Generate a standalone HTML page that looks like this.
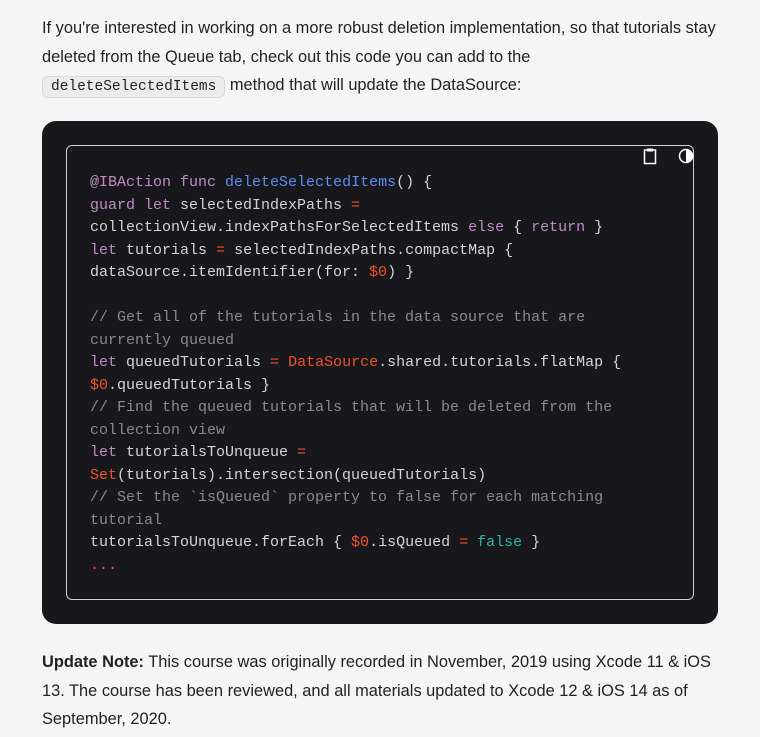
<!DOCTYPE html>
<html><head><meta charset="utf-8"><style>
body{margin:0;background:#f5f5f5;width:760px;height:737px;overflow:hidden;font-family:"Liberation Sans",sans-serif;color:#222;}
p{margin:0;position:absolute;left:42px;width:700px;font-size:16.4px;line-height:28.5px;white-space:nowrap;}
code.i{font-family:"Liberation Mono",monospace;font-size:14.5px;background:#ebebeb;border:1px solid #d8d8d8;border-radius:6px;padding:2px 8px;}
.dark{position:absolute;left:42px;top:121px;width:676px;height:503px;background:#18181c;border-radius:14px;}
.inner{position:absolute;left:24px;top:24px;width:626px;height:453px;border:1px solid #d0d0d0;border-radius:6px;}
pre{margin:0;position:absolute;left:23px;top:26px;font-family:"Liberation Mono",monospace;font-size:15px;line-height:22.5px;color:#d4d4d4;}
.k{color:#c08ac6}.f{color:#5b8ef0}.o{color:#f0522c}.c{color:#8a8a8a}.t{color:#2bb3a6}
</style></head><body>
<p style="top:14px">If you're interested in working on a more robust deletion implementation, so that tutorials stay<br>deleted from the Queue tab, check out this code you can add to the<br><code class="i">deleteSelectedItems</code> method that will update the DataSource:</p>
<div class="dark"><div class="inner">
<svg style="position:absolute;left:575px;top:1px" width="16" height="18" viewBox="0 0 16 18"><rect x="2.5" y="3" width="11" height="13.5" fill="none" stroke="#fff" stroke-width="1.5"/><rect x="5" y="1.5" width="6" height="3" fill="#fff"/></svg>
<svg style="position:absolute;left:611px;top:1px" width="16" height="18" viewBox="0 0 16 18"><circle cx="8" cy="9" r="6.5" fill="none" stroke="#fff" stroke-width="1.5"/><path d="M8 2.5A6.5 6.5 0 0 1 8 15.5Z" fill="#fff"/></svg>
<pre><span class="k">@IBAction func</span> <span class="f">deleteSelectedItems</span>() {
<span class="k">guard let</span> selectedIndexPaths <span class="o">=</span>
collectionView.indexPathsForSelectedItems <span class="k">else</span> { <span class="k">return</span> }
<span class="k">let</span> tutorials <span class="o">=</span> selectedIndexPaths.compactMap {
dataSource.itemIdentifier(for: <span class="o">$0</span>) }

<span class="c">// Get all of the tutorials in the data source that are
currently queued</span>
<span class="k">let</span> queuedTutorials <span class="o">=</span> <span class="o">DataSource</span>.shared.tutorials.flatMap {
<span class="o">$0</span>.queuedTutorials }
<span class="c">// Find the queued tutorials that will be deleted from the
collection view</span>
<span class="k">let</span> tutorialsToUnqueue <span class="o">=</span>
<span class="o">Set</span>(tutorials).intersection(queuedTutorials)
<span class="c">// Set the `isQueued` property to false for each matching
tutorial</span>
tutorialsToUnqueue.forEach { <span class="o">$0</span>.isQueued <span class="o">=</span> <span class="t">false</span> }
<span class="o">...</span></pre>
</div></div>
<p style="top:648px"><b>Update Note:</b> This course was originally recorded in November, 2019 using Xcode 11 &amp; iOS<br>13. The course has been reviewed, and all materials updated to Xcode 12 &amp; iOS 14 as of<br>September, 2020.</p>
</body></html>
